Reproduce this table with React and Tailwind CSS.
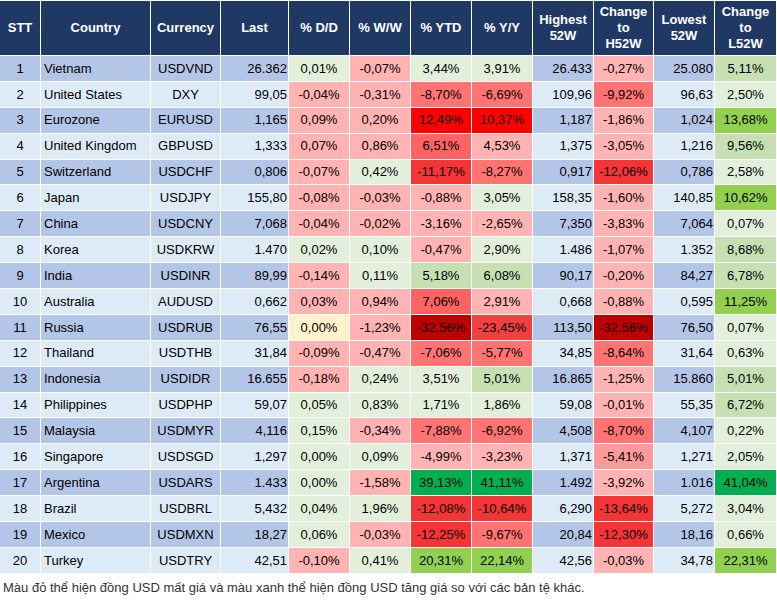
const C = {
  pr: "bg-[#ffb3b3]",
  pr2: "bg-[#ff9a9a]",
  mr: "bg-[#ff7373]",
  mr2: "bg-[#ff6262]",
  sr: "bg-[#f53535]",
  sr2: "bg-[#f04040]",
  rr: "bg-[#ff0000]",
  dr: "bg-[#c00000]",
  lg: "bg-[#e2efda]",
  mg: "bg-[#c6e0b4]",
  sg: "bg-[#92d050]",
  dg: "bg-[#00b050]",
  y: "bg-[#fff2cc]",
};

const rows = [
  ["Vietnam", "USDVND", "26.362", ["0,01%", "lg"], ["-0,07%", "pr"], ["3,44%", "lg"], ["3,91%", "lg"], "26.433", ["-0,27%", "pr"], "25.080", ["5,11%", "mg"]],
  ["United States", "DXY", "99,05", ["-0,04%", "pr"], ["-0,31%", "pr"], ["-8,70%", "mr"], ["-6,69%", "mr"], "109,96", ["-9,92%", "mr"], "96,63", ["2,50%", "lg"]],
  ["Eurozone", "EURUSD", "1,165", ["0,09%", "pr"], ["0,20%", "pr"], ["12,49%", "rr"], ["10,37%", "rr"], "1,187", ["-1,86%", "pr"], "1,024", ["13,68%", "sg"]],
  ["United Kingdom", "GBPUSD", "1,333", ["0,07%", "pr"], ["0,86%", "pr"], ["6,51%", "mr2"], ["4,53%", "pr"], "1,375", ["-3,05%", "pr"], "1,216", ["9,56%", "mg"]],
  ["Switzerland", "USDCHF", "0,806", ["-0,07%", "pr"], ["0,42%", "lg"], ["-11,17%", "sr"], ["-8,27%", "mr"], "0,917", ["-12,06%", "sr"], "0,786", ["2,58%", "lg"]],
  ["Japan", "USDJPY", "155,80", ["-0,08%", "pr"], ["-0,03%", "pr"], ["-0,88%", "pr"], ["3,05%", "lg"], "158,35", ["-1,60%", "pr"], "140,85", ["10,62%", "sg"]],
  ["China", "USDCNY", "7,068", ["-0,04%", "pr"], ["-0,02%", "pr"], ["-3,16%", "pr"], ["-2,65%", "pr"], "7,350", ["-3,83%", "pr"], "7,064", ["0,07%", "lg"]],
  ["Korea", "USDKRW", "1.470", ["0,02%", "lg"], ["0,10%", "lg"], ["-0,47%", "pr"], ["2,90%", "lg"], "1.486", ["-1,07%", "pr"], "1.352", ["8,68%", "mg"]],
  ["India", "USDINR", "89,99", ["-0,14%", "pr"], ["0,11%", "lg"], ["5,18%", "mg"], ["6,08%", "mg"], "90,17", ["-0,20%", "pr"], "84,27", ["6,78%", "mg"]],
  ["Australia", "AUDUSD", "0,662", ["0,03%", "pr"], ["0,94%", "pr"], ["7,06%", "mr2"], ["2,91%", "pr"], "0,668", ["-0,88%", "pr"], "0,595", ["11,25%", "sg"]],
  ["Russia", "USDRUB", "76,55", ["0,00%", "y"], ["-1,23%", "pr"], ["-32,56%", "dr"], ["-23,45%", "sr2"], "113,50", ["-32,56%", "dr"], "76,50", ["0,07%", "lg"]],
  ["Thailand", "USDTHB", "31,84", ["-0,09%", "pr"], ["-0,47%", "pr"], ["-7,06%", "mr"], ["-5,77%", "mr"], "34,85", ["-8,64%", "mr"], "31,64", ["0,63%", "lg"]],
  ["Indonesia", "USDIDR", "16.655", ["-0,18%", "pr"], ["0,24%", "lg"], ["3,51%", "lg"], ["5,01%", "mg"], "16.865", ["-1,25%", "pr"], "15.860", ["5,01%", "mg"]],
  ["Philippines", "USDPHP", "59,07", ["0,05%", "lg"], ["0,83%", "lg"], ["1,71%", "lg"], ["1,86%", "lg"], "59,08", ["-0,01%", "pr"], "55,35", ["6,72%", "mg"]],
  ["Malaysia", "USDMYR", "4,116", ["0,15%", "lg"], ["-0,34%", "pr"], ["-7,88%", "mr"], ["-6,92%", "mr"], "4,508", ["-8,70%", "mr"], "4,107", ["0,22%", "lg"]],
  ["Singapore", "USDSGD", "1,297", ["0,00%", "lg"], ["0,09%", "lg"], ["-4,99%", "pr"], ["-3,23%", "pr"], "1,371", ["-5,41%", "pr2"], "1,271", ["2,05%", "lg"]],
  ["Argentina", "USDARS", "1.433", ["0,00%", "lg"], ["-1,58%", "pr"], ["39,13%", "dg"], ["41,11%", "dg"], "1.492", ["-3,92%", "pr"], "1.016", ["41,04%", "dg"]],
  ["Brazil", "USDBRL", "5,432", ["0,04%", "lg"], ["1,96%", "lg"], ["-12,08%", "sr"], ["-10,64%", "sr"], "6,290", ["-13,64%", "sr"], "5,272", ["3,04%", "lg"]],
  ["Mexico", "USDMXN", "18,27", ["0,06%", "lg"], ["-0,03%", "pr"], ["-12,25%", "sr"], ["-9,67%", "mr"], "20,84", ["-12,30%", "sr"], "18,16", ["0,66%", "lg"]],
  ["Turkey", "USDTRY", "42,51", ["-0,10%", "pr"], ["0,41%", "lg"], ["20,31%", "sg"], ["22,14%", "sg"], "42,56", ["-0,03%", "pr"], "34,78", ["22,31%", "sg"]],
];

const headers = [
  "STT", "Country", "Currency", "Last", "% D/D", "% W/W", "% YTD", "% Y/Y",
  "Highest\n52W", "Change\nto\nH52W", "Lowest\n52W", "Change\nto\nL52W",
];

function Pct({ cell }) {
  return (
    <div className={`flex items-center justify-center ${C[cell[1]]}`}>{cell[0]}</div>
  );
}

function Row({ r, i }) {
  const base = i % 2 === 0 ? "bg-[#b4c6e7]" : "bg-[#ddebf7]";
  return (
    <>
      <div className={`flex items-center justify-center ${base}`}>{i + 1}</div>
      <div className={`flex items-center pl-[3px] ${base}`}>{r[0]}</div>
      <div className={`flex items-center justify-center ${base}`}>{r[1]}</div>
      <div className={`flex items-center justify-end pr-[1px] ${base}`}>{r[2]}</div>
      <Pct cell={r[3]} />
      <Pct cell={r[4]} />
      <Pct cell={r[5]} />
      <Pct cell={r[6]} />
      <div className={`flex items-center justify-end pr-[1px] ${base}`}>{r[7]}</div>
      <Pct cell={r[8]} />
      <div className={`flex items-center justify-end pr-[1px] ${base}`}>{r[9]}</div>
      <Pct cell={r[10]} />
    </>
  );
}

export default function App() {
  return (
    <div className="w-[777px] h-[602px] bg-white font-['Liberation_Sans',Arial,sans-serif] text-[13px] text-black">
      <div className="pt-px grid grid-cols-[40px_109px_69px_67px_60px_60px_60px_60px_60px_59px_60px_61px] grid-rows-[54px] auto-rows-[24.9px] gap-px bg-white w-[775px]">
        {headers.map((h) => (
          <div
            key={h}
            className="flex items-center justify-center text-center whitespace-pre-line bg-[#1f3864] text-white font-bold text-[13px] leading-[16px]"
          >
            {h}
          </div>
        ))}
        {rows.map((r, i) => (
          <Row key={i} r={r} i={i} />
        ))}
      </div>
      <p className="mt-[5px] pl-[3px] text-[13px] text-[#333]">
        Màu đỏ thể hiện đồng USD mất giá và màu xanh thể hiện đồng USD tăng giá so với các bản tệ khác.
      </p>
    </div>
  );
}
